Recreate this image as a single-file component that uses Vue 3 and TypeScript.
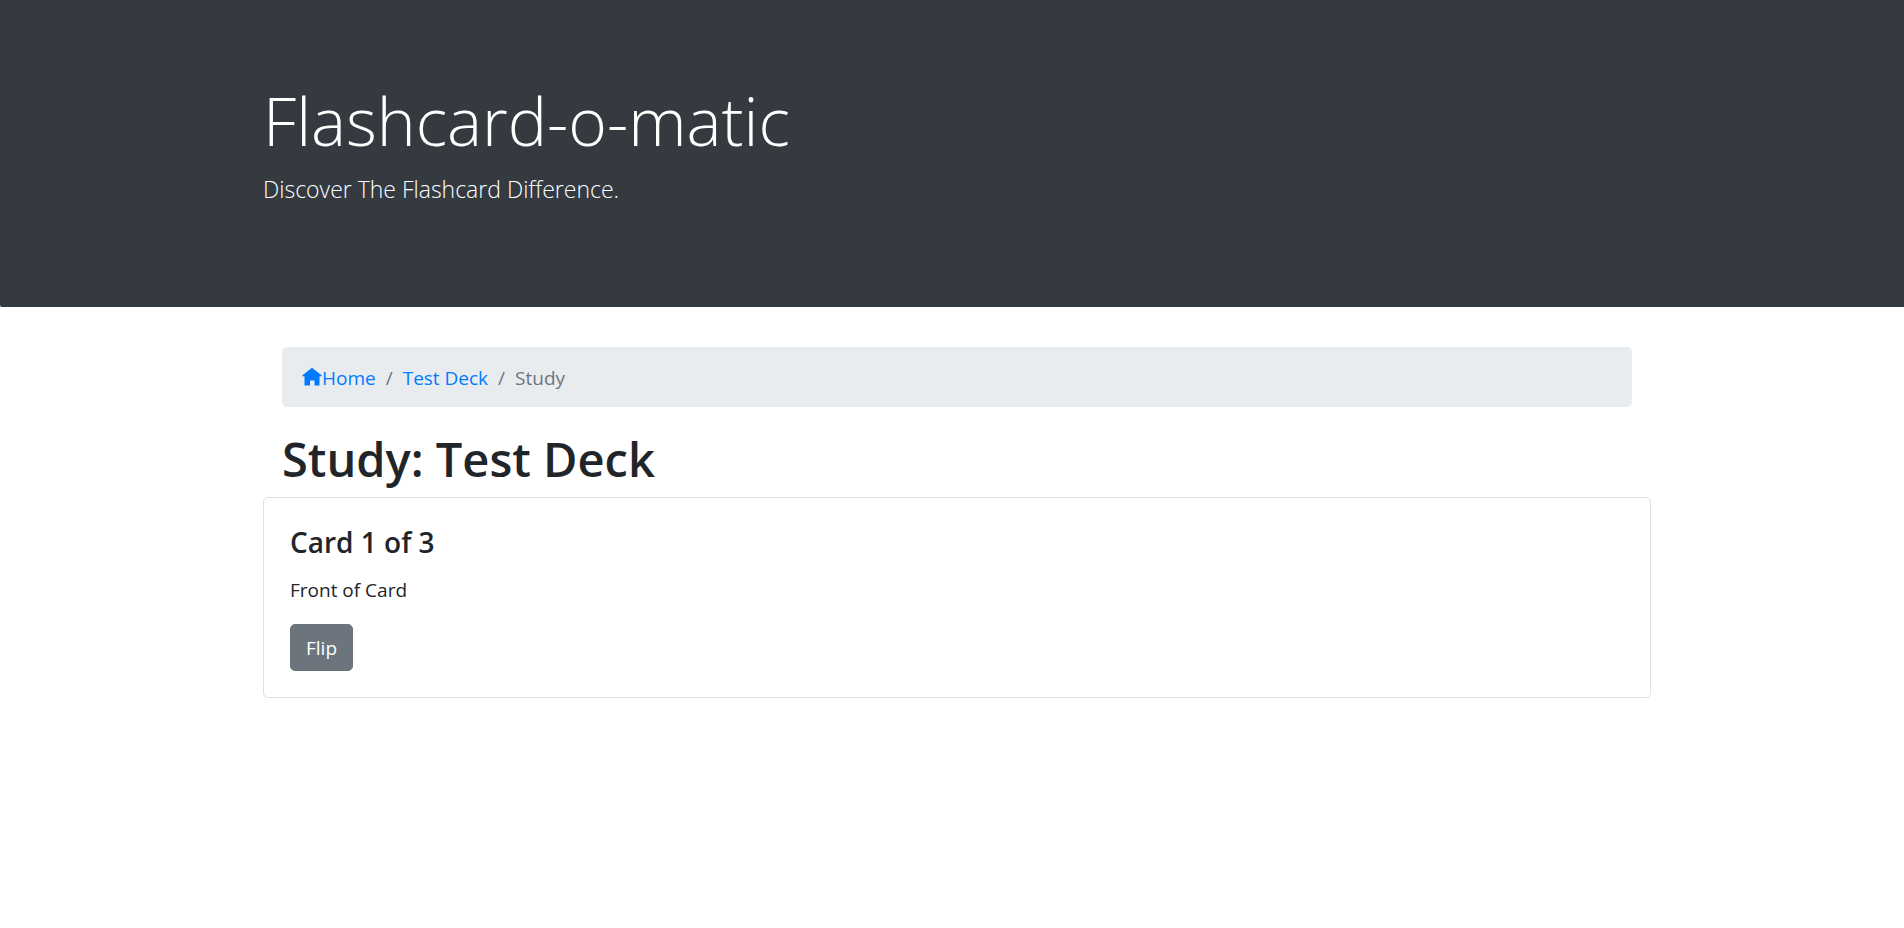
<script setup lang="ts">
import { computed, ref } from 'vue'

interface Card {
  front: string
  back: string
}

const deckName = 'Test Deck'
const cards: Card[] = [
  { front: 'Front of Card', back: 'Back of Card' },
  { front: 'Front of Card', back: 'Back of Card' },
  { front: 'Front of Card', back: 'Back of Card' },
]
const index = ref(0)
const flipped = ref(false)
const text = computed(() => (flipped.value ? cards[index.value].back : cards[index.value].front))
</script>

<template>
  <div class="page">
    <header class="banner">
      <div class="container">
        <h1 class="brand">Flashcard-o-matic</h1>
        <p class="tagline">Discover The Flashcard Difference.</p>
      </div>
    </header>
    <main class="container">
      <div class="intro">
        <nav aria-label="breadcrumb">
          <ol class="breadcrumb">
            <li>
              <a href="#">
                <svg class="home" viewBox="0 0 20 20" aria-hidden="true">
                  <path d="M10 .8 19.600 8.300V9.300H17.500V18.500H12.500V13.500H8V18.500H2.500V9.300H.5V8.300Z" fill="currentColor" />
                </svg>Home</a>
            </li>
            <li><a href="#">{{ deckName }}</a></li>
            <li aria-current="page">Study</li>
          </ol>
        </nav>
        <h2 class="heading">Study: {{ deckName }}</h2>
      </div>
      <section class="card">
        <h3 class="card-title">Card {{ index + 1 }} of {{ cards.length }}</h3>
        <p class="card-text">{{ text }}</p>
        <button class="flip" type="button" @click="flipped = !flipped">Flip</button>
      </section>
    </main>
  </div>
</template>

<style>
body {
  margin: 0;
  background: #fff;
}
</style>

<style scoped>
.page {
  color: #212529;
  font: 400 19px/30px "Segoe UI", "Open Sans", "Noto Sans", sans-serif;
}
.container {
  box-sizing: border-box;
  max-width: 1398px;
  margin: 0 auto;
  padding-left: 10px;
}
.banner {
  padding: 78px 0 79px;
  margin-bottom: 40px;
  border-bottom-left-radius: 2px;
  background: #343a40;
  color: #fff;
}
h1, h2, h3, p, ol {
  margin: 0;
  padding: 0;
}
.brand {
  margin-bottom: 8px;
  font-size: 66px;
  font-weight: 300;
  line-height: 84px;
}
.tagline {
  margin-bottom: 20px;
  font-size: 23px;
  font-weight: 300;
  line-height: 38px;
}
.intro {
  padding: 0 19px;
}
.breadcrumb {
  display: flex;
  flex-wrap: wrap;
  margin-bottom: 20px;
  padding: 16px 20px 14px;
  border-radius: 5px;
  background: #e9ecef;
  color: #6c757d;
  list-style: none;
}
.breadcrumb li + li::before {
  content: "/";
  padding: 0 10px;
}
.breadcrumb a {
  color: #007bff;
  text-decoration: none;
}
.home {
  width: 20px;
  height: 20px;
  vertical-align: -2px;
}
.heading {
  margin-bottom: 6px;
  font-size: 47px;
  font-weight: 600;
  line-height: 64px;
}
.card {
  padding: 26px;
  border: 1px solid #dfdfdf;
  border-radius: 5px;
}
.card-title {
  margin-bottom: 15px;
  font-size: 28px;
  font-weight: 600;
  line-height: 36px;
}
.card-text {
  margin-bottom: 19px;
}
.flip {
  padding: 8px 15px 7px;
  border: 1px solid #6c757d;
  border-radius: 5px;
  background: #6c757d;
  color: #fff;
  font: inherit;
  cursor: pointer;
}
</style>
